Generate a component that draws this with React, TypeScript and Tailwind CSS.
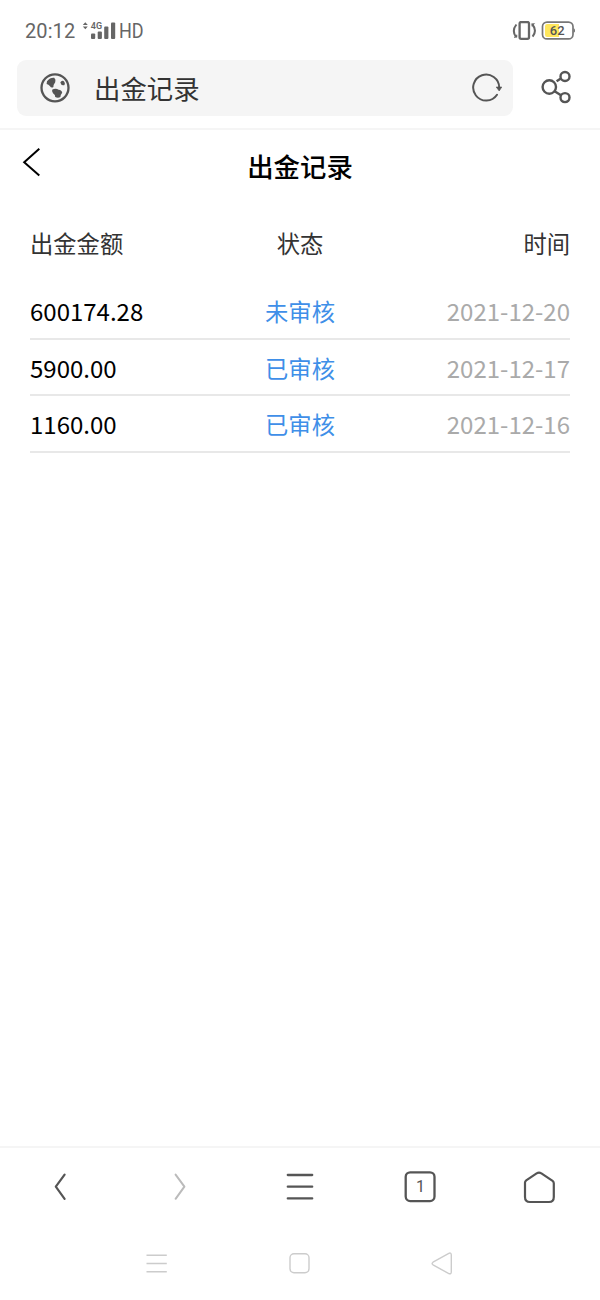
const records = [
  { amount: "600174.28", status: "未审核", date: "2021-12-20" },
  { amount: "5900.00", status: "已审核", date: "2021-12-17" },
  { amount: "1160.00", status: "已审核", date: "2021-12-16" },
];

function StatusBar() {
  return (
    <div className="flex h-[60px] items-center justify-between pl-[25px] pr-[25px] pt-px font-['Roboto',sans-serif] text-[#666]">
      <div className="flex items-center">
        <span className="w-[57px] text-[20px] leading-[24px] tracking-[0.1px]">20:12</span>
        {/* Signal strength */}
        <svg width="36" height="20" viewBox="82 20.5 36 20" fill="#666">
          <path d="M82.8 24.6 85.3 21.8 87.8 24.6ZM82.8 26 85.3 28.8 87.8 26Z" />
          <text x="90.8" y="28.4" fontSize="9" fontWeight="600" textLength="11.4">4G</text>
          <rect x="91" y="33" width="4.2" height="5.5" rx="1" />
          <rect x="97.7" y="31" width="4.2" height="7.5" rx="1" />
          <rect x="104.2" y="26" width="4.2" height="12.5" rx="1" />
          <rect x="111" y="22" width="4.2" height="16.5" rx="1" />
        </svg>
        <span className="ml-px origin-left scale-x-[0.9] text-[20px] leading-[24px]">HD</span>
      </div>

      <div className="flex items-center gap-[5px]">
        {/* Vibrate mode */}
        <svg width="24" height="20" viewBox="512 20.5 24 20" fill="none" stroke="#666" strokeWidth="2">
          <rect x="519.6" y="21.5" width="9.4" height="16.8" rx="1.6" strokeWidth="2.3" />
          <path d="M516.4 24Q511.6 30 515.8 36M532.4 24Q537.4 30 532.6 36.2" />
          <path d="M514 37 517 36.8 517 34.2ZM531.6 23.2 534.6 23 532 25.8Z" fill="#666" strokeWidth="0.5" />
        </svg>
        <svg width="34" height="20" viewBox="541 20.5 34 20">
          <rect x="542.5" y="21.6" width="30.5" height="16.8" rx="4.5" fill="#fff" stroke="#777" strokeWidth="1.7" />
          <path d="M547.2 23.5H559V36.5H547.2Q545 36.5 545 34.3V25.7Q545 23.5 547.2 23.5Z" fill="#ffe75d" />
          <path d="M573.5 27.5Q577 30 573.5 32.5Z" fill="#777" />
          <text x="557.2" y="34.7" fontSize="13" fontWeight="500" fill="#555" textAnchor="middle">62</text>
        </svg>
      </div>
    </div>
  );
}

function AddressBar() {
  return (
    <div className="flex h-[70px] items-start justify-between border-b-2 border-[#f5f5f5] pl-[17px] pr-[28px]">
      <div className="flex h-[56px] w-[496px] items-center rounded-[9px] bg-[#f5f5f5] pl-[22px] pr-[10px]">
        <svg width="32" height="32" viewBox="39 72 32 32" fill="#555">
          <circle cx="55" cy="87.8" r="13.5" fill="none" stroke="#555" strokeWidth="2.3" />
          <path d="M47 81.2Q50 77.4 54.2 77.8Q56.2 79.4 55.2 82.2Q53.2 84.8 53.4 87Q51.4 88.4 49.8 86Q48.6 84.2 46.6 83.9Z" />
          <path d="M60.3 82.4Q61.6 79.9 63.6 81Q65.8 83.6 64.2 85.2Q61.2 85.8 60.3 82.4Z" />
          <path d="M52.4 89.6Q55.8 88 58.6 89.8Q61.8 90.2 62.2 92.7Q60.6 94.6 60.4 97Q58 98.6 55.2 97Q55.6 94.6 53 93.2Q51.4 91 52.4 89.6Z" />
        </svg>
        <span className="ml-[23px] flex-1 text-[26.4px] leading-[36px] text-[#333]">出金记录</span>
        <svg width="32" height="32" viewBox="471 72 32 32" fill="none">
          <path d="M499.2 87.5A13 13 0 1 0 497 94.8" stroke="#555" strokeWidth="2" strokeLinecap="round" />
          <path d="M496.2 87H501.8L499.2 91Z" fill="#555" stroke="#555" strokeWidth="0.6" strokeLinejoin="round" />
        </svg>
      </div>
      <svg className="mt-[10px]" width="32" height="34" viewBox="540 70 32 34" fill="none" stroke="#555" strokeWidth="2.4">
        <circle cx="549.3" cy="87" r="6.7" />
        <circle cx="565" cy="76.5" r="4.5" />
        <circle cx="565" cy="97.6" r="4.5" />
        <path d="M556.6 81.3 560.8 78.4M554.6 91.2 561.4 95.6" />
      </svg>
    </div>
  );
}

function BrowserToolbar() {
  return (
    <div className="grid h-[80px] grid-cols-5 place-items-center border-t-2 border-[#f5f5f5] text-[#555]">
      <svg width="40" height="40" viewBox="40 1167 40 40" fill="none" stroke="currentColor" strokeWidth="2.2" strokeLinecap="round" strokeLinejoin="round">
        <path d="M64.6 1174.6 55.8 1186.7 64.6 1198.8" />
      </svg>
      <svg width="40" height="40" viewBox="160 1167 40 40" fill="none" stroke="#bbb" strokeWidth="2" strokeLinecap="round" strokeLinejoin="round">
        <path d="M175.6 1174.6 184.4 1186.7 175.6 1198.8" />
      </svg>
      <svg width="40" height="40" viewBox="280 1167 40 40" stroke="currentColor" strokeWidth="2.3" strokeLinecap="round">
        <path d="M287.8 1175H312.2M287.8 1186.7H312.2M287.8 1198.4H312.2" />
      </svg>
      <svg width="40" height="40" viewBox="400 1167 40 40" fill="none">
        <rect x="405.7" y="1172.3" width="28.8" height="28.8" rx="4.5" stroke="currentColor" strokeWidth="2.3" />
        <text x="420.4" y="1192.2" fontSize="16" fill="currentColor" textAnchor="middle" className="font-['Roboto',sans-serif]">
          1
        </text>
      </svg>
      <svg width="40" height="40" viewBox="520 1167 40 40" fill="none" stroke="currentColor" strokeWidth="2.2" strokeLinejoin="round">
        <path d="M525 1182.6Q525 1181.2 526.2 1180.3L536.6 1173.4Q539 1172 541.4 1173.4L552.6 1180.9Q553.8 1181.8 553.8 1183.2V1197Q553.8 1202 549 1202H530Q525 1202 525 1197Z" />
      </svg>
    </div>
  );
}

function SystemNav() {
  return (
    <div className="flex h-[74px] items-start justify-between pl-[146px] pr-[147px] pt-[26px]">
      <svg width="21" height="22" viewBox="146 1252 21 22" stroke="#ccc" strokeWidth="1.4">
        <path d="M146.5 1255.2H166.8M146.5 1263.5H166.8M146.5 1271.8H166.8" />
      </svg>
      <svg width="22" height="22" viewBox="288.5 1252 22 22" fill="none" stroke="#ccc" strokeWidth="1.4">
        <rect x="290.5" y="1253.8" width="19" height="19" rx="4" />
      </svg>
      <svg width="22" height="24" viewBox="431 1252 22 24" fill="none" stroke="#ccc" strokeWidth="1.4">
        <path d="M433 1262.2 448.8 1253.3Q451.3 1252.4 451.3 1255V1272Q451.3 1274.4 448.8 1273.6L433 1264.8Q431.2 1263.5 433 1262.2Z" />
      </svg>
    </div>
  );
}

export default function App() {
  return (
    <div className="flex h-[1300px] w-[600px] flex-col bg-white font-['Noto_Sans_CJK_SC',sans-serif]">
      <StatusBar />
      <AddressBar />

      <main className="flex-1">
        <header className="grid h-[72px] grid-cols-[100px_1fr_100px] items-center">
          <svg className="-mt-[9px] ml-[20px]" width="24" height="32" viewBox="20 146 24 32" fill="none" stroke="#000" strokeWidth="2">
            <path d="M39.3 148.7 24.2 162.3 39.3 175.5" />
          </svg>
          <h1 className="text-center text-[26.4px] font-medium leading-[38px] text-black">出金记录</h1>
        </header>

        <div className="px-[30px]">
          <div className="grid h-[81px] grid-cols-3 pt-[23px] text-[23.3px] leading-[36px] text-[#333]">
            <span>出金金额</span>
            <span className="text-center">状态</span>
            <span className="text-right">时间</span>
          </div>
          {records.map((r) => (
            <div
              key={r.date}
              className="grid h-[56.7px] grid-cols-3 items-center border-b-2 border-[#e8e8e8] pt-px text-[24px] leading-[36px]"
            >
              <span className="text-black">{r.amount}</span>
              <span className="text-center text-[23.3px] text-[#3f8fe8]">{r.status}</span>
              <span className="text-right text-[#aaa]">{r.date}</span>
            </div>
          ))}
        </div>
      </main>

      <BrowserToolbar />
      <SystemNav />
    </div>
  );
}
